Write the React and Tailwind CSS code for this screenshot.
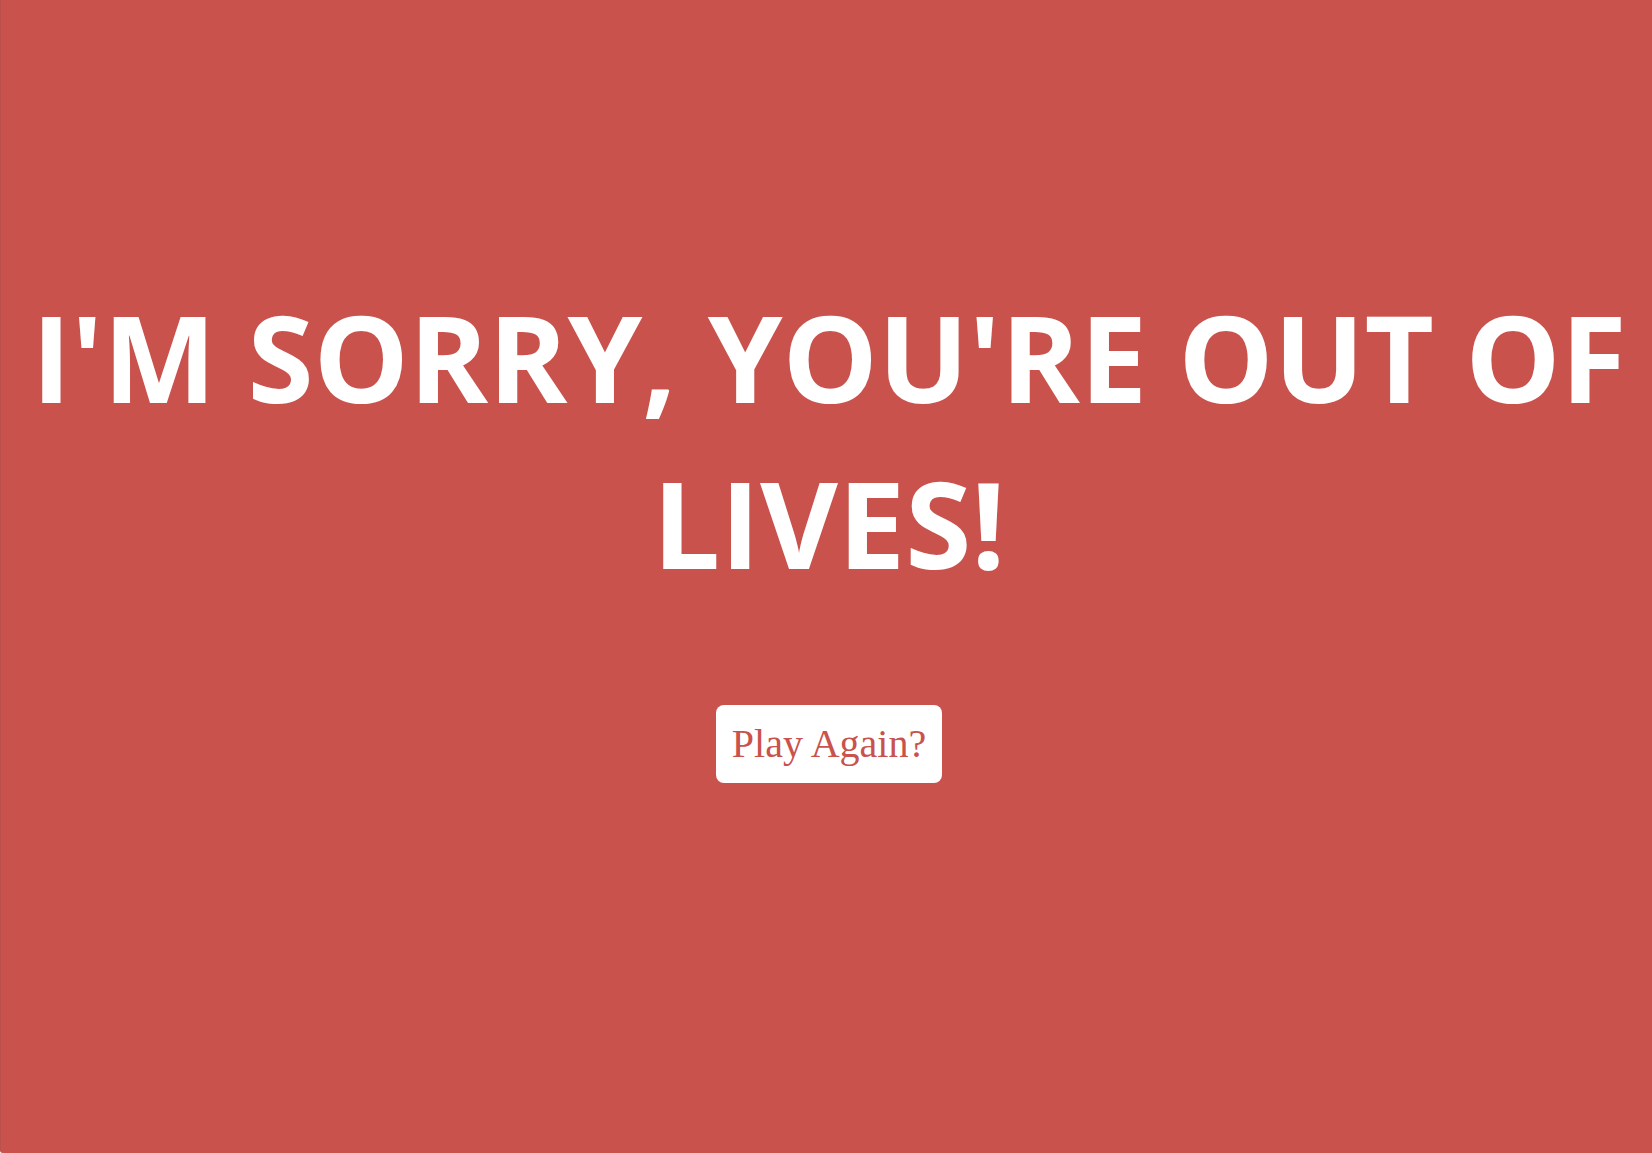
import React from 'react';

const App = () => {
  return (
    <div className="min-h-screen w-full bg-[#c9524d] border-l border-[#b9504b] rounded-bl-[3px] flex flex-col items-center pt-[274px] pl-[5px]">
      {/* Game over message */}
      <h1 className="text-center text-white font-bold uppercase text-[120px] leading-[166px] font-['Open_Sans',sans-serif]">
        I'm sorry, you're out of lives!
      </h1>

      <button className="mt-[99px] w-[226px] h-[78px] bg-white rounded-lg text-[#c9524d] text-[40px] font-['Liberation_Serif',serif]">
        Play Again?
      </button>
    </div>
  );
};

export default App;
